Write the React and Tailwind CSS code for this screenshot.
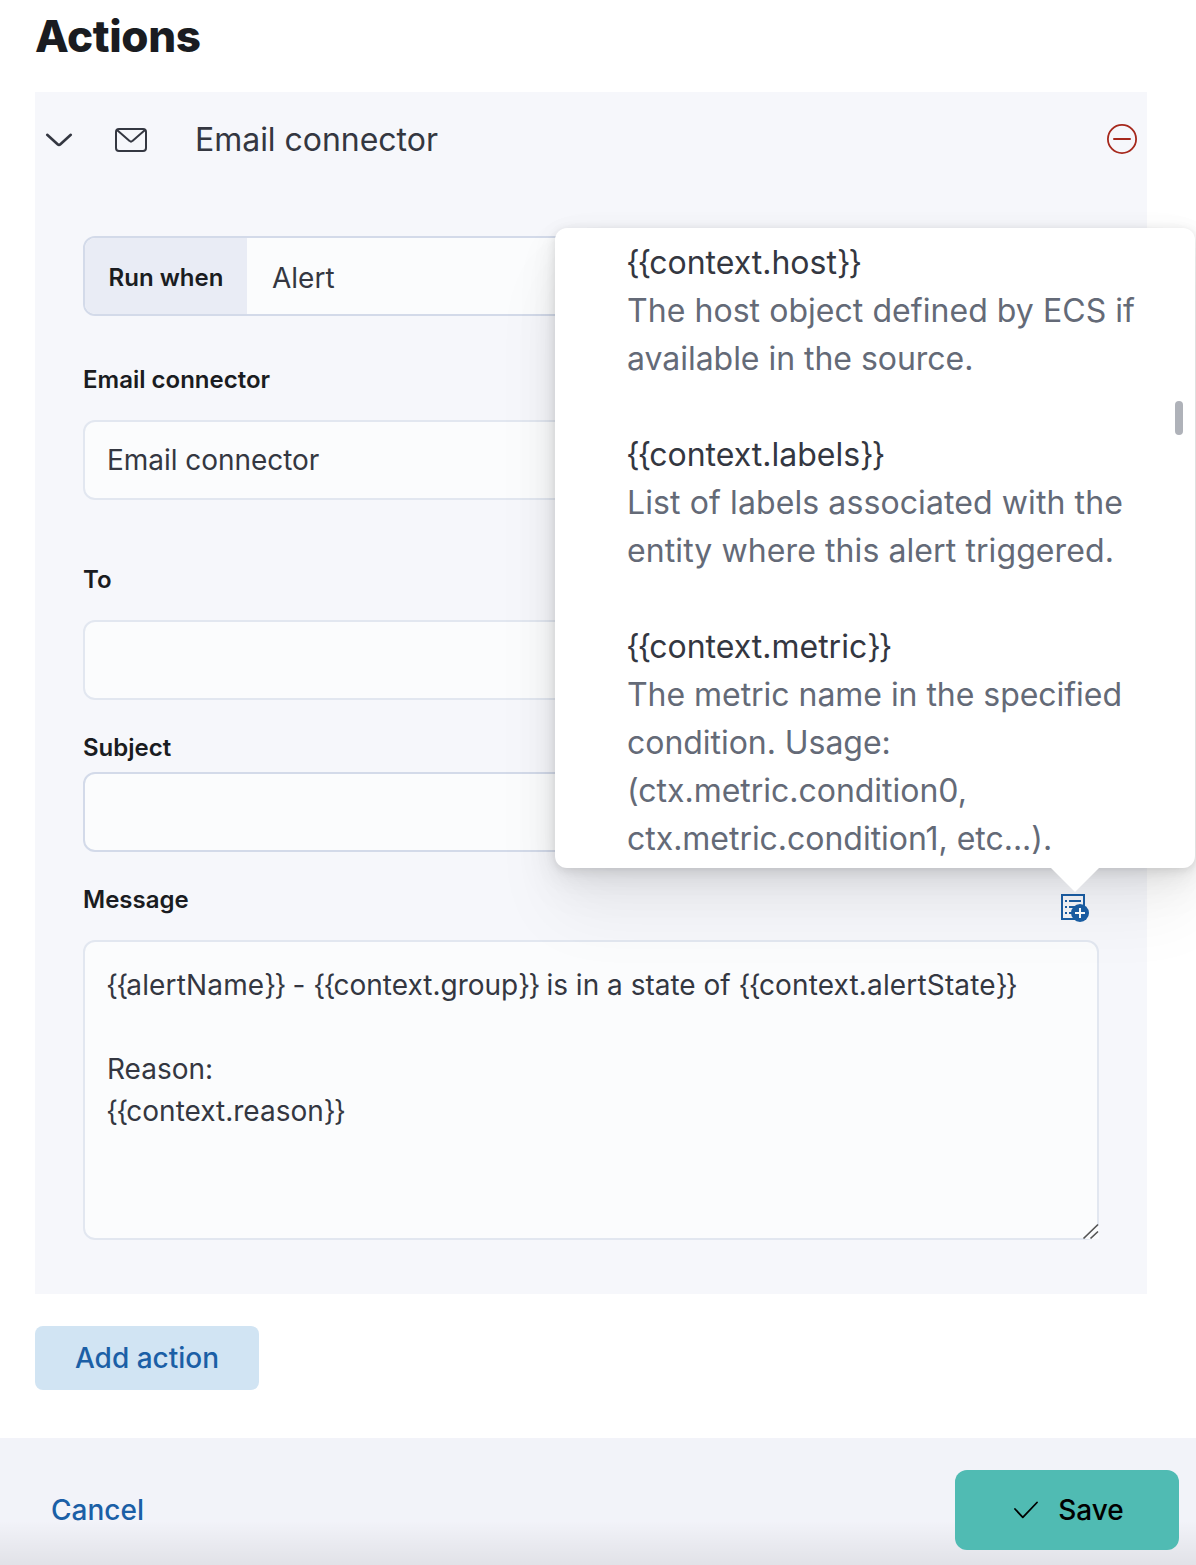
import React from "react";

const variables = [
  {
    name: "context.host",
    lines: [
      { text: "The host object defined by ECS if", tracking: "tracking-[0.05px]" },
      { text: "available in the source.", tracking: "tracking-[-0.03px]" },
    ],
  },
  {
    name: "context.labels",
    lines: [
      { text: "List of labels associated with the", tracking: "tracking-[0.1px]" },
      { text: "entity where this alert triggered.", tracking: "tracking-[0.09px]" },
    ],
  },
  {
    name: "context.metric",
    lines: [
      { text: "The metric name in the specified", tracking: "tracking-[-0.04px]" },
      { text: "condition. Usage:", tracking: "tracking-[-0.04px]" },
      { text: "(ctx.metric.condition0,", tracking: "tracking-[-0.02px]" },
      { text: "ctx.metric.condition1, etc...).", tracking: "tracking-[-0.03px]" },
    ],
  },
];

function ChevronDown() {
  return (
    <svg width="32" height="32" viewBox="0 0 32 32" fill="none" stroke="#343741" strokeWidth="2.6" strokeLinecap="round" strokeLinejoin="round">
      <path d="M4.2 10.8 14.6 20.3a2 2 0 0 0 2.8 0L27.8 10.8" />
    </svg>
  );
}

function Mail() {
  return (
    <svg width="32" height="32" viewBox="0 0 32 32" fill="none" stroke="#343741" strokeWidth="2" strokeLinejoin="round">
      <rect x="1" y="5" width="30" height="22" rx="3" />
      <path d="M2 6 14.6 16.9a2 2 0 0 0 2.8 0L30 6" />
    </svg>
  );
}

function MinusCircle() {
  return (
    <svg className="mb-0.5" width="32" height="32" viewBox="0 0 32 32" fill="none" stroke="#a6281c" strokeWidth="1.8">
      <circle cx="16" cy="16" r="14.1" />
      <path d="M8 16h16" strokeWidth="2" strokeLinecap="round" />
    </svg>
  );
}

function IndexOpen() {
  return (
    <svg className="mt-4" width="32" height="32" viewBox="0 0 32 32" fill="none">
      <path d="M3 3h22v24H3z" stroke="#1b5fa6" strokeWidth="2" />
      <path d="M6 9h2M6 15h2M6 21h2M10 9h12M10 15h8M10 21h5" stroke="#1b5fa6" strokeWidth="2" />
      <circle cx="21" cy="21" r="9" fill="#1b5fa6" />
      <path d="M21 16v10M16 21h10" stroke="#fff" strokeWidth="2" />
    </svg>
  );
}

function Variable({ name, className = "" }) {
  return (
    <>
      <span className="tracking-[-0.064em]">{"{{"}</span>
      <span className={className}>{name}</span>
      <span className="tracking-[-0.064em]">{"}}"}</span>
    </>
  );
}

function Label({ children, className = "" }) {
  return <div className={`flex items-center text-[24px] font-semibold leading-6 text-[#1a1c21] ${className}`}>{children}</div>;
}

function Field({ children, className }) {
  return <div className={`flex h-20 items-center overflow-hidden rounded-xl border-2 bg-[#fbfcfd] text-[28px] ${className}`}>{children}</div>;
}

function VariablesPopover() {
  return (
    <div className="absolute left-[520px] top-[136px] z-10 h-[640px] w-[640px] rounded-xl bg-white pl-[72px] pt-[11px] text-[32px] leading-[48px] shadow-[0_2px_10px_rgba(0,0,0,0.1),0_7px_26px_rgba(0,0,0,0.07),0_17px_46px_rgba(0,0,0,0.06),0_46px_70px_rgba(0,0,0,0.05)]">
      <div className="flex flex-col gap-12">
        {variables.map((v) => (
          <div key={v.name}>
            <div className="-ml-px"><Variable name={v.name} /></div>
            {v.lines.map((line) => (
              <div key={line.text} className={`whitespace-nowrap text-[#646a77] ${line.tracking}`}>{line.text}</div>
            ))}
          </div>
        ))}
      </div>
      <div className="absolute right-[12px] top-[173px] h-[34px] w-2 rounded-full bg-[#afb2b9]" />
      <svg className="absolute left-[496px] top-[640px]" width="48" height="24" viewBox="0 0 48 24">
        <path d="M0 0h48L24 24z" fill="#fff" />
      </svg>
    </div>
  );
}

export default function App() {
  return (
    <div className="flex h-[1565px] w-[1196px] flex-col overflow-hidden bg-white font-['Inter',sans-serif] text-[#343741]">
      <h1 className="h-[92px] pl-[35px] pt-2 text-[44px] font-extrabold leading-[56px] tracking-[-0.4px] text-[#1a1c21]">Actions</h1>

      <section className="relative ml-[35px] h-[1202px] w-[1112px] bg-[#f6f7fb] px-12">
        <header className="-mx-12 flex h-24 items-center pl-2 pr-[9px]">
          <ChevronDown />
          <div className="ml-10"><Mail /></div>
          <h2 className="ml-12 flex-1 text-[32px] tracking-[-0.03px]">Email connector</h2>
          <MinusCircle />
        </header>

        <Field className="mt-12 border-[#d3dae9]">
          <div className="flex h-full w-[162px] items-center justify-center bg-[#e9ecf5] pt-1 text-[24px] font-semibold text-[#1a1c21]">Run when</div>
          <div className="pl-[25px] pt-1">Alert</div>
        </Field>

        <Label className="mt-[52px]">Email connector</Label>
        <Field className="mt-7 border-[#e2e7f0] pl-[22px] tracking-[-0.04px]">Email connector</Field>

        <Label className="mt-[68px]">To</Label>
        <Field className="mt-7 border-[#e2e7f0]" />

        <Label className="mt-9">Subject</Label>
        <Field className="mt-3 border-[#d3dae9]" />

        <div className="mt-8 flex h-8 items-center justify-between pr-2">
          <Label>Message</Label>
          <IndexOpen />
        </div>
        <div className="relative mt-6 h-[300px] rounded-xl border-2 border-[#e2e7f0] bg-[#fbfcfd] pl-[22px] pt-[22px] text-[28px] leading-[42px]">
          <p className="-ml-px whitespace-nowrap">
            <Variable name="alertName" className="tracking-[0.15px]" /> - <Variable name="context.group" /> is in a state of{" "}
            <Variable name="context.alertState" className="tracking-[0.15px]" />
          </p>
          <p className="mt-[42px]">Reason:</p>
          <p className="-ml-px"><Variable name="context.reason" /></p>
          <svg className="absolute -bottom-0.5 -right-0.5" width="18" height="18" viewBox="0 0 18 18" fill="none">
            <path d="M4 17 18 3v14z" fill="#fbfcfd" />
            <path d="M2.5 16.5 17 2.5M9.5 16.5l7.5-7" stroke="#555" strokeWidth="1.7" />
          </svg>
        </div>

        <VariablesPopover />
      </section>

      <button className="ml-[35px] mt-8 h-16 w-56 shrink-0 rounded-lg bg-[#d1e4f3] text-[28px] font-medium text-[#1b5fa6]">Add action</button>

      <footer className="mt-12 flex h-[127px] shrink-0 items-start justify-between bg-[#f2f3f9] bg-linear-to-b from-transparent from-65% to-black/7 pl-[51px] pr-[17px] pt-8">
        <button className="h-20 text-[28px] font-medium text-[#1b5fa6]">Cancel</button>
        <button className="flex h-20 w-56 items-center justify-center gap-4 rounded-xl bg-[#50bbb3] text-[28px] font-medium text-black">
          <svg width="32" height="32" viewBox="0 0 32 32" fill="none" stroke="#000" strokeWidth="1.8" strokeLinecap="round" strokeLinejoin="round">
            <path d="m5 15 7.8 8.3L27 8.5" />
          </svg>
          Save
        </button>
      </footer>
    </div>
  );
}
